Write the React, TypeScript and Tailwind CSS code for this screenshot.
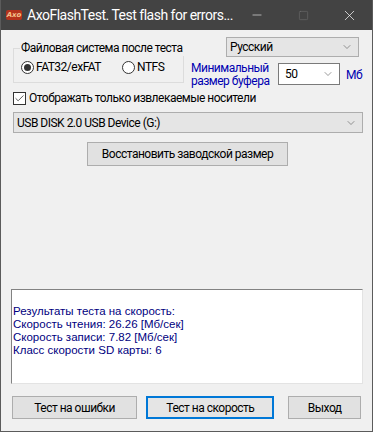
import { ChevronDown, Minus, Square, X, Check } from 'lucide-react';

const ui = "font-['Roboto',sans-serif] tracking-[-0.5px]";

function Combo({ value, className }: { value: string; className: string }) {
  return (
    <div className={`flex items-center justify-between border border-[#adadad] bg-[#e5e5e5] pl-[3px] pr-[5px] text-[12px] text-black whitespace-nowrap ${className}`}>
      <span>{value}</span>
      <ChevronDown size={12} strokeWidth={1.2} className="text-[#555]" />
    </div>
  );
}

function WinButton({ label, focused, className }: { label: string; focused?: boolean; className: string }) {
  return (
    <div
      className={`flex items-center justify-center text-[12px] text-black whitespace-nowrap ${
        focused ? 'border-2 border-[#0078d7] bg-[#e5e5e5]' : 'border border-[#adadad] bg-[#e1e1e1]'
      } ${className}`}
    >
      {label}
    </div>
  );
}

export default function App() {
  return (
    <div className={`w-[373px] h-[432px] flex flex-col bg-[#f0f0f0] border border-[#5b5b5b] border-t-0 ${ui}`}>
      {/* title bar */}
      <div className="h-[30px] bg-[#434343] flex items-center text-white shrink-0 whitespace-nowrap">
        <div className="ml-[5px] w-[16px] h-[10px] bg-[#b5321c] rounded-[2px] flex items-center justify-center">
          <span className="text-[7px] leading-none italic font-bold tracking-normal text-[#f3c08a] font-['DejaVu_Sans',sans-serif]">Axo</span>
        </div>
        <span className="ml-[5px] text-[14px]">AxoFlashTest. Test flash for errors...</span>
        <div className="ml-auto flex items-center">
          <div className="w-[46px] flex justify-center"><Minus size={14} strokeWidth={1} /></div>
          <div className="w-[46px] flex justify-center text-[#7a7a7a]"><Square size={11} strokeWidth={1} /></div>
          <div className="w-[46px] flex justify-center"><X size={17} strokeWidth={1} /></div>
        </div>
      </div>

      <div className="flex-1 flex flex-col px-[11px]">
        {/* top row */}
        <div className="flex mt-[7px] h-[49px]">
          <fieldset className="mt-[3px] ml-[1px] w-[171px] min-w-0 h-[43px] border border-[#dcdcdc] px-[7px] pb-0 pt-0 shrink-0">
            <legend className="px-[1px] -ml-[1px] text-[12px] leading-[16px] text-black whitespace-nowrap">Файловая система после теста</legend>
            <div className="flex items-center mt-[2px] text-[12px] text-black whitespace-nowrap">
              <div className="w-[13px] h-[13px] rounded-full border border-[#333] bg-white flex items-center justify-center">
                <div className="w-[7px] h-[7px] rounded-full bg-[#333]" />
              </div>
              <span className="ml-[2px]">FAT32/exFAT</span>
              <div className="ml-[21px] w-[13px] h-[13px] rounded-full border border-[#333] bg-white" />
              <span className="ml-[2px]">NTFS</span>
            </div>
          </fieldset>
          <div className="ml-[7px] flex flex-col">
            <Combo value="Русский" className="ml-[35px] w-[133px] h-[21px]" />
            <div className="flex items-start mt-[4px]">
              <div className="text-[12px] leading-[13px] text-[#0000b0] w-[87px] mt-[1px] whitespace-nowrap">
                Минимальный<br />размер буфера
              </div>
              <div className="mt-[2px] w-[62px] h-[22px] border border-[#7a7a7a] bg-white flex items-center justify-between pl-[6px] pr-[5px] text-[12px] text-black">
                <span>50</span>
                <ChevronDown size={12} strokeWidth={1.2} className="text-[#555]" />
              </div>
              <span className="ml-[6px] mt-[5px] text-[12px] text-[#0000b0]">Мб</span>
            </div>
          </div>
        </div>

        {/* checkbox */}
        <div className="flex items-center h-[16px] mt-[4px] ml-[1px] text-[12px] text-black whitespace-nowrap">
          <div className="w-[13px] h-[13px] border border-[#333] bg-white flex items-center justify-center">
            <Check size={11} strokeWidth={1.6} className="text-[#222]" />
          </div>
          <span className="ml-[3px]">Отображать только извлекаемые носители</span>
        </div>

        {/* drive combo */}
        <Combo value="USB DISK 2.0 USB Device (G:)" className="mt-[6px] ml-[1px] w-[350px] h-[21px] shrink-0" />

        {/* restore button */}
        <WinButton label="Восстановить заводской размер" className="mt-[9px] ml-[75px] w-[201px] h-[24px] shrink-0" />

        {/* results */}
        <div className="mt-[123px] -ml-[1px] w-[352px] h-[95px] shrink-0 border border-[#828282] border-r-[#e3e3e3] border-b-[#e3e3e3] bg-white pt-[15px] pl-[1px] text-[11.5px] leading-[13px] tracking-normal text-[#000080] whitespace-nowrap font-['Liberation_Sans',Arial,sans-serif]">
          <div>Результаты теста на скорость:</div>
          <div>Скорость чтения: 26.26 [Мб/сек]</div>
          <div>Скорость записи: 7.82 [Мб/сек]</div>
          <div>Класс скорости SD карты: 6</div>
        </div>

        {/* bottom buttons */}
        <div className="flex mt-[12px]">
          <WinButton label="Тест на ошибки" className="w-[126px] h-[23px]" />
          <WinButton label="Тест на скорость" focused className="ml-[9px] w-[129px] h-[23px]" />
          <WinButton label="Выход" className="ml-[14px] w-[73px] h-[23px]" />
        </div>
      </div>
    </div>
  );
}
